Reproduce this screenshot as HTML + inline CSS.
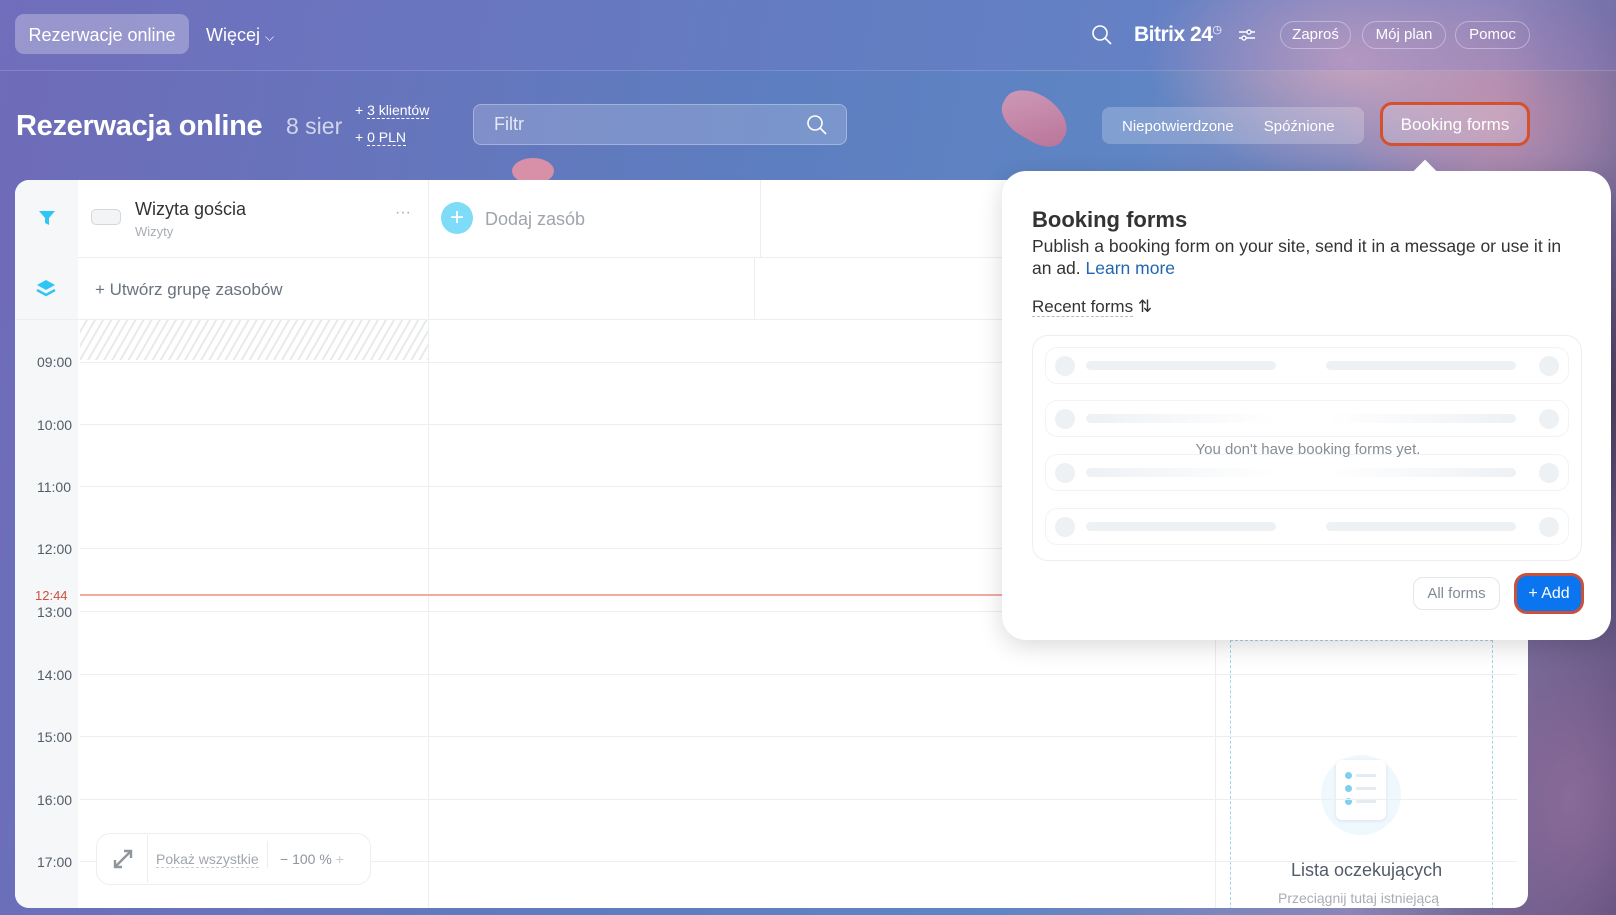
<!DOCTYPE html>
<html><head><meta charset="utf-8"><style>
*{box-sizing:border-box;margin:0;padding:0}
body{width:1616px;height:915px;overflow:hidden;position:relative;font-family:"Liberation Sans",sans-serif;
background:
radial-gradient(ellipse 120px 200px at 1570px 800px,#8a6a98 0%,rgba(138,106,152,0) 100%),
radial-gradient(ellipse 200px 120px at 1350px 60px,rgba(220,170,190,.8) 0%,rgba(220,170,190,0) 100%),
radial-gradient(ellipse 200px 200px at 1570px 400px,#4a3a5a 0%,rgba(74,58,90,0) 100%),
radial-gradient(ellipse 160px 140px at 1500px 120px,rgba(190,140,170,.9) 0%,rgba(190,140,170,0) 100%),
linear-gradient(100deg,#6f6bb8 0%,#5d7ec0 45%,#5f85c4 65%,#8a86b8 85%,#5a4a78 100%);}
.abs{position:absolute}
.top{left:0;top:0;width:1616px;height:71px;background:rgba(120,120,200,.25);border-bottom:1px solid rgba(255,255,255,.15)}
.pill{position:absolute;border:1px solid rgba(255,255,255,.35);border-radius:14px;color:#fff;font-size:15px;text-align:center;line-height:26px;height:28px;top:21px}
.panel{left:15px;top:180px;width:1513px;height:728px;background:#fff;border-radius:14px;overflow:hidden}
.time{position:absolute;left:37px;font-size:14px;color:#535c69;width:50px}
.hl{position:absolute;left:80px;width:1437px;height:1px;background:#eceeef}
.sk{position:absolute;height:37px;left:12px;right:12px;border:1px solid #f1f3f5;border-radius:12px}
.dot{position:absolute;width:20px;height:20px;border-radius:50%;background:#eef1f4;top:8px}
.bar{position:absolute;height:9px;border-radius:5px;background:#eef1f4;top:13px}
</style></head><body>
<div class="abs" style="left:1000px;top:95px;width:70px;height:45px;border-radius:50% 60% 40% 50%;background:linear-gradient(135deg,#e4a0b8,#c87090);transform:rotate(30deg);opacity:.85"></div>
<div class="abs" style="left:512px;top:158px;width:42px;height:26px;border-radius:50%;background:#d88fa8"></div>
<div class="abs top"></div>
<div class="abs" style="left:15px;top:14px;width:174px;height:40px;border-radius:9px;background:rgba(255,255,255,.28);color:#fff;font-size:18px;line-height:42px;text-align:center">Rezerwacje online</div>
<div class="abs" style="left:206px;top:25px;color:#fff;font-size:18px">Więcej <span style="font-size:12px">⌵</span></div>
<svg class="abs" style="left:1091px;top:24px" width="22" height="22" viewBox="0 0 22 22"><circle cx="9" cy="9" r="7" fill="none" stroke="#fff" stroke-width="1.6"/><path d="M14 14l6 6" stroke="#fff" stroke-width="1.6"/></svg>
<div class="abs" style="left:1134px;top:23px;color:#fff;font-size:21px;font-weight:bold;letter-spacing:-.5px">Bitrix 24<sup style="font-size:11px;font-weight:normal">◷</sup></div>
<svg class="abs" style="left:1238px;top:27px" width="18" height="16" viewBox="0 0 18 16"><path d="M1 5h16M1 11h16" stroke="#fff" stroke-width="1.4"/><circle cx="11" cy="5" r="2" fill="#6a80c0" stroke="#fff" stroke-width="1.4"/><circle cx="6" cy="11" r="2" fill="#6a80c0" stroke="#fff" stroke-width="1.4"/></svg>
<div class="pill" style="left:1280px;width:71px">Zaproś</div>
<div class="pill" style="left:1362px;width:84px">Mój plan</div>
<div class="pill" style="left:1455px;width:75px">Pomoc</div>

<div class="abs" style="left:16px;top:110px;color:#fff;font-size:29px;font-weight:bold;letter-spacing:-.3px">Rezerwacja online</div>
<div class="abs" style="left:286px;top:113px;color:rgba(255,255,255,.7);font-size:23px">8 sier</div>
<div class="abs" style="left:355px;top:102px;color:#fff;font-size:14px">+ <span style="border-bottom:1px dashed #fff">3 klientów</span></div>
<div class="abs" style="left:355px;top:129px;color:#fff;font-size:14px">+ <span style="border-bottom:1px dashed #fff">0 PLN</span></div>
<div class="abs" style="left:473px;top:104px;width:374px;height:41px;border-radius:8px;background:rgba(255,255,255,.18);border:1px solid rgba(255,255,255,.3);color:rgba(255,255,255,.8);font-size:18px;line-height:39px;padding-left:20px">Filtr</div>
<svg class="abs" style="left:806px;top:114px" width="22" height="22" viewBox="0 0 22 22"><circle cx="9" cy="9" r="7" fill="none" stroke="#fff" stroke-width="1.6"/><path d="M14 14l6 6" stroke="#fff" stroke-width="1.6"/></svg>
<div class="abs" style="left:1102px;top:107px;width:262px;height:37px;border-radius:8px;background:rgba(255,255,255,.22);color:#fff;font-size:15px;line-height:39px"><span style="margin-left:20px">Niepotwierdzone</span><span style="margin-left:30px">Spóźnione</span></div>
<div class="abs" style="left:1380px;top:102px;width:150px;height:44px;border-radius:12px;border:3px solid #d4502f;background:rgba(255,255,255,.2);color:#fff;font-size:17px;line-height:40px;text-align:center">Booking forms</div>

<div class="abs panel">
 <div class="abs" style="left:0;top:0;width:63px;height:728px;background:#f5f7f8"></div>
 <svg class="abs" style="left:22px;top:28px" width="20" height="20" viewBox="0 0 20 20"><path d="M2 3h16l-6 7v7l-4-2v-5z" fill="#2fc6f6"/></svg>
 <svg class="abs" style="left:20px;top:99px" width="22" height="20" viewBox="0 0 22 20"><path d="M11 1l9 5-9 5-9-5z" fill="#2fc6f6"/><path d="M2 11l9 5 9-5" fill="none" stroke="#2fc6f6" stroke-width="2.5"/></svg>
 <div class="abs" style="left:76px;top:29px;width:30px;height:16px;border:1.5px solid #d5d7db;border-radius:5px;background:#f3f4f5"></div>
 <div class="abs" style="left:120px;top:19px;font-size:18px;color:#333">Wizyta gościa</div>
 <div class="abs" style="left:120px;top:44px;font-size:13px;color:#a8adb4">Wizyty</div>
 <div class="abs" style="left:380px;top:24px;font-size:16px;color:#a8adb4">···</div>
 <div class="abs" style="left:413px;top:0;width:1px;height:140px;background:#eceeef"></div>
 <div class="abs" style="left:426px;top:22px;width:32px;height:32px;border-radius:50%;background:#7fdcf8;color:#fff;font-size:24px;line-height:31px;text-align:center">+</div>
 <div class="abs" style="left:470px;top:29px;font-size:18px;color:#a0a5ab">Dodaj zasób</div>
 <div class="abs" style="left:745px;top:0;width:1px;height:78px;background:#eceeef"></div>
 <div class="abs" style="left:739px;top:78px;width:1px;height:62px;background:#eceeef"></div>
 <div class="abs" style="left:63px;top:77px;width:1460px;height:1px;background:#eceeef"></div>
 <div class="abs" style="left:80px;top:100px;font-size:17px;color:#6a737f">+ Utwórz grupę zasobów</div>
 <div class="abs" style="left:0;top:139px;width:1460px;height:1px;background:#eceeef"></div>
 <div class="abs" style="left:65px;top:140px;width:348px;height:40px;background:repeating-linear-gradient(120deg,#fff 0 5px,#e8eaec 5px 7px)"></div>
 <div class="abs" style="left:413px;top:140px;width:1px;height:590px;background:#eceeef"></div>
 <div class="abs" style="left:1200px;top:440px;width:1px;height:290px;background:#eceeef"></div>
 <div class="abs" style="left:1215px;top:460px;width:263px;height:270px;border:1px dashed #9fd6e6;border-bottom:none"></div>
 <div class="abs" style="left:1306px;top:575px;width:80px;height:80px;border-radius:50%;background:#eef8fd"></div>
 <div class="abs" style="left:1321px;top:580px;width:50px;height:60px;border-radius:6px;background:#fff;box-shadow:0 1px 3px #dde"></div>
 <div class="abs" style="left:1330px;top:592px;width:7px;height:7px;border-radius:50%;background:#7fd0ef;box-shadow:0 13px 0 #7fd0ef,0 26px 0 #7fd0ef"></div>
 <div class="abs" style="left:1341px;top:594px;width:20px;height:3px;background:#e6ebef;box-shadow:0 13px 0 #e6ebef,0 26px 0 #e6ebef"></div>
 <div class="abs" style="left:1276px;top:680px;font-size:18px;color:#535c69">Lista oczekujących</div>
 <div class="abs" style="left:1263px;top:710px;font-size:14px;color:#a8adb4">Przeciągnij tutaj istniejącą</div>
</div>
<div class="hl" style="top:362px"></div>
<div class="hl" style="top:424px"></div><div class="hl" style="top:486px"></div><div class="hl" style="top:548px"></div><div class="hl" style="top:611px"></div><div class="hl" style="top:674px"></div><div class="hl" style="top:736px"></div><div class="hl" style="top:799px"></div><div class="hl" style="top:861px"></div>
<div class="time" style="top:354px">09:00</div><div class="time" style="top:417px">10:00</div><div class="time" style="top:479px">11:00</div><div class="time" style="top:541px">12:00</div><div class="time" style="top:604px">13:00</div><div class="time" style="top:667px">14:00</div><div class="time" style="top:729px">15:00</div><div class="time" style="top:792px">16:00</div><div class="time" style="top:854px">17:00</div>
<div class="abs" style="left:80px;top:594px;width:930px;height:2px;background:#f2a9a0"></div>
<div class="abs" style="left:35px;top:588px;font-size:13px;color:#d0503e">12:44</div>
<div class="abs" style="left:96px;top:833px;width:275px;height:52px;border:1px solid #eceeef;border-radius:14px;background:#fff"></div>
<svg class="abs" style="left:112px;top:848px" width="22" height="22" viewBox="0 0 22 22"><path d="M3 19L19 3M12 3h7v7M3 12v7h7" fill="none" stroke="#8e959d" stroke-width="2.4"/></svg>
<div class="abs" style="left:147px;top:835px;width:1px;height:48px;background:#eceeef"></div>
<div class="abs" style="left:156px;top:851px;font-size:14px;color:#a0a5ab;border-bottom:1px dashed #ccc">Pokaż wszystkie</div>
<div class="abs" style="left:267px;top:841px;width:1px;height:27px;background:#eceeef"></div>
<div class="abs" style="left:280px;top:851px;font-size:14px;color:#8e959d">− 100 % <span style="color:#ccc">+</span></div>

<div class="abs" style="left:1002px;top:171px;width:609px;height:469px;background:#fff;border-radius:24px;box-shadow:0 6px 24px rgba(0,0,0,.15)"></div>
<div class="abs" style="left:1417px;top:163px;width:16px;height:16px;background:#fff;transform:rotate(45deg)"></div>
<div class="abs" style="left:1032px;top:207px;font-size:22px;font-weight:bold;color:#333">Booking forms</div>
<div class="abs" style="left:1032px;top:235px;width:545px;font-size:17.5px;line-height:22px;color:#333">Publish a booking form on your site, send it in a message or use it in an ad. <span style="color:#2067b0">Learn more</span></div>
<div class="abs" style="left:1032px;top:297px;font-size:17px;color:#333"><span style="border-bottom:1px dashed #bbb">Recent forms</span> ⇅</div>
<div class="abs" style="left:1032px;top:335px;width:550px;height:226px;border:1px solid #eceeef;border-radius:16px">
 <div class="sk" style="top:11px"><div class="dot" style="left:9px"></div><div class="bar" style="left:40px;width:190px"></div><div class="bar" style="left:280px;width:190px"></div><div class="dot" style="right:9px"></div></div>
 <div class="sk" style="top:64px"><div class="dot" style="left:9px"></div><div class="bar" style="left:40px;width:190px;background:linear-gradient(90deg,#eef1f4,#fff)"></div><div class="bar" style="left:280px;width:190px;background:linear-gradient(90deg,#fff,#eef1f4)"></div><div class="dot" style="right:9px"></div></div>
 <div class="sk" style="top:118px"><div class="dot" style="left:9px"></div><div class="bar" style="left:40px;width:190px;background:linear-gradient(90deg,#eef1f4,#fff)"></div><div class="bar" style="left:280px;width:190px;background:linear-gradient(90deg,#fff,#eef1f4)"></div><div class="dot" style="right:9px"></div></div>
 <div class="sk" style="top:172px"><div class="dot" style="left:9px"></div><div class="bar" style="left:40px;width:190px"></div><div class="bar" style="left:280px;width:190px"></div><div class="dot" style="right:9px"></div></div>
 <div class="abs" style="left:0;width:550px;top:105px;text-align:center;font-size:15px;color:#868d95">You don't have booking forms yet.</div>
</div>
<div class="abs" style="left:1413px;top:577px;width:87px;height:33px;border:1px solid #e4e6e8;border-radius:10px;font-size:15px;color:#828b95;line-height:31px;text-align:center">All forms</div>
<div class="abs" style="left:1514px;top:573px;width:70px;height:41px;border:3px solid #c9503a;border-radius:13px;background:#0b74ef;color:#fff;font-size:16px;line-height:35px;text-align:center">+ Add</div>
</body></html>
